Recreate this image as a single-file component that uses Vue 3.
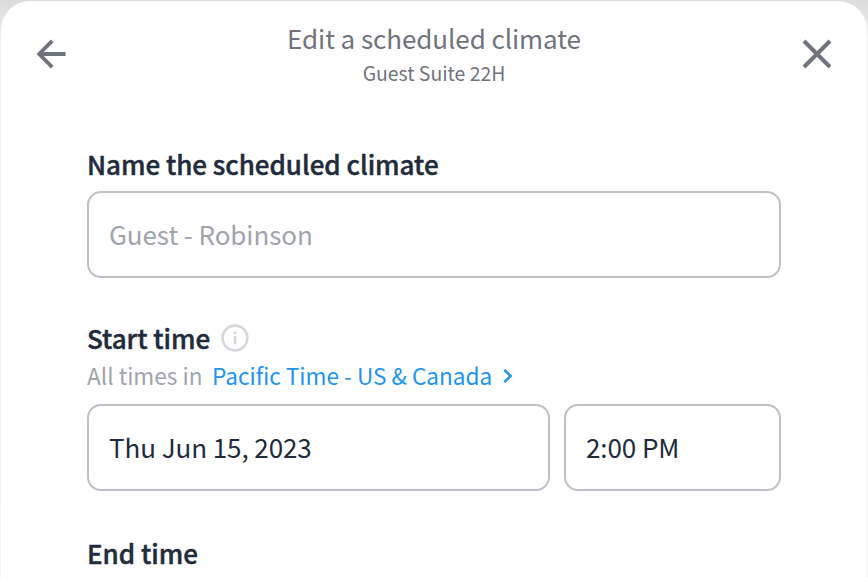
<script setup>
const form = {
  title: 'Edit a scheduled climate',
  location: 'Guest Suite 22H',
  placeholder: 'Guest - Robinson',
  zone: 'Pacific Time - US & Canada',
  date: 'Thu Jun 15, 2023',
  time: '2:00 PM',
}
</script>

<template>
  <div class="backdrop">
    <main class="sheet">
      <header class="header">
        <svg class="icon arrow" width="32" height="32" viewBox="0 0 32 32">
          <path d="M30.5 16H4M17.2 2.8L4.2 16l13 13.2" />
        </svg>
        <div class="heading">
          <div class="title">{{ form.title }}</div>
          <div class="subtitle">{{ form.location }}</div>
        </div>
        <svg class="icon" width="32" height="32" viewBox="0 0 32 32">
          <path d="M3 3l26 26M29 3L3 29" />
        </svg>
      </header>

      <section class="group">
        <div class="label">Name the scheduled climate</div>
        <div class="field"><span class="placeholder">{{ form.placeholder }}</span></div>
      </section>

      <section class="group start">
        <div class="label">
          <span>Start time</span>
          <svg class="info" width="28" height="28" viewBox="0 0 28 28">
            <circle cx="14" cy="14" r="12.4" />
            <path d="M14 12v8.2M14 7.8v2.2" />
          </svg>
        </div>
        <div class="zone">
          <span class="muted">All times in</span>
          <span class="link">{{ form.zone }}</span>
          <svg class="chevron" width="12" height="16" viewBox="0 0 12 16">
            <path d="M2.3 1.9L8.7 8l-6.4 6.1" />
          </svg>
        </div>
        <div class="row">
          <div class="field">{{ form.date }}</div>
          <div class="field time">{{ form.time }}</div>
        </div>
      </section>

      <section class="group end">
        <div class="label">End time</div>
      </section>
    </main>
  </div>
</template>

<style>
body {
  overflow: hidden;
}
</style>

<style scoped>
.backdrop {
  box-sizing: border-box;
  height: 578px;
  padding: 1px 1px 0;
  background: linear-gradient(#dcdcdc, #efefef 40px, #f0f0f0);
  font-family: "Noto Sans CJK SC", "Noto Sans", sans-serif;
  overflow: hidden;
  white-space: nowrap;
}
.sheet {
  box-sizing: border-box;
  height: 600px;
  border-radius: 29px 29px 0 0;
  background: #fff;
  padding: 19px 34px 0;
}
.header {
  display: flex;
  justify-content: space-between;
  height: 125px;
}
.icon {
  margin-top: 18px;
  fill: none;
  stroke: #6f737d;
  stroke-width: 4;
}
.arrow {
  stroke-width: 3.8;
}
.heading {
  text-align: center;
  color: #6f737d;
}
.title {
  font-size: 26px;
  line-height: 36px;
  letter-spacing: -0.07px;
}
.subtitle {
  font-size: 19.4px;
  line-height: 34px;
}
.group {
  margin: 0 52px;
}
.label {
  display: flex;
  align-items: center;
  height: 36px;
  margin-bottom: 10px;
  font-size: 26px;
  font-weight: 500;
  letter-spacing: -0.03px;
  -webkit-text-stroke: 0.45px #222b3c;
  color: #222b3c;
}
.field {
  box-sizing: border-box;
  flex: 1;
  height: 87px;
  padding: 0 20px 2px;
  border: 2px solid #bcc0c7;
  border-radius: 14px;
  display: flex;
  align-items: center;
  font-size: 26px;
  letter-spacing: -0.08px;
  color: #222b3c;
}
.placeholder {
  color: #a0a4ad;
}
.start {
  margin-top: 41px;
}
.start .label {
  margin: 0;
}
.info {
  margin-left: 11px;
  margin-top: 2px;
  fill: none;
  stroke: #d4d7dc;
  stroke-width: 2.6;
}
.zone {
  display: flex;
  align-items: center;
  height: 38px;
  padding-top: 1px;
  margin-bottom: 10px;
  font-size: 22.6px;
}
.muted {
  width: 125px;
  color: #a0a4ad;
}
.link {
  color: #2094f3;
}
.chevron {
  margin-left: 9.5px;
  margin-top: 2px;
  fill: none;
  stroke: #2094f3;
  stroke-width: 2.5;
}
.row {
  display: flex;
  gap: 14.5px;
}
.time {
  flex: 0 0 217px;
}
.end {
  margin-top: 43px;
}
</style>
